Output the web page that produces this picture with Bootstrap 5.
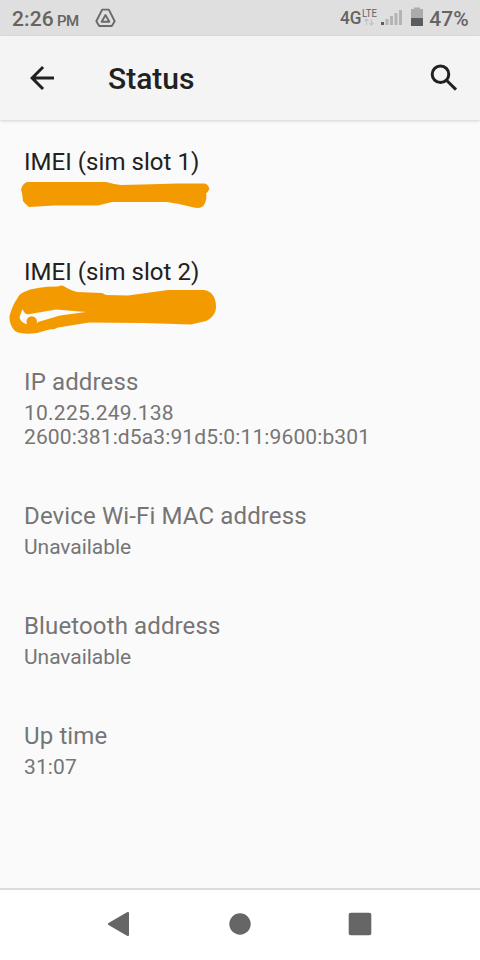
<!DOCTYPE html>
<html lang="en">
<head>
<meta charset="utf-8">
<meta name="viewport" content="width=device-width, initial-scale=1">
<title>Status</title>
<link href="https://cdn.jsdelivr.net/npm/bootstrap@5.3.0/dist/css/bootstrap.min.css" rel="stylesheet">
<style>
body{font-family:Roboto,"Liberation Sans",sans-serif;background:#fafafa;color:#212121;width:480px;height:960px;overflow:hidden}
svg{display:block;flex:none}
.statusbar{height:36px;background:#dfdfdf;color:#646464;padding:0 12px;font-weight:500;line-height:36px}
.clock{font-size:21px;letter-spacing:.15px;padding-top:1px}
.ampm{font-size:15px;margin-left:3px;padding-top:5px;letter-spacing:-.5px}
.drive{margin-left:16px}
.battery{margin-left:6px}
.level{margin:0 -1px 0 5px}
.appbar{height:84px;background:#f4f4f4;padding:0 21px 0 24px;box-shadow:0 1px 3px rgba(0,0,0,.16);z-index:1}
.screen-title{font-size:30px;font-weight:500;line-height:36px;margin-left:48px;padding-top:1px}
.settings{padding:1px 24px 0}
.entry{padding:25px 0 26px}
.entry-title{font-size:24px;line-height:32px;margin-bottom:3px;letter-spacing:.05px}
.entry.off .entry-title{letter-spacing:.13px}
.entry-value{font-size:21px;line-height:24px;min-height:24px;letter-spacing:-.04px}
.numeric{letter-spacing:.12px}
.ipv4{letter-spacing:.24px}
.off{color:#757575}
.scribble{left:-24px;top:-11px}
.navkeys{height:72px;background:#fff;border-top:2px solid #dcdcdc;padding:0 100px 2px}
</style>
</head>
<body class="d-flex flex-column">
<div class="statusbar d-flex align-items-center">
  <span class="clock">2:26</span><span class="ampm">PM</span>
  <svg class="drive" width="21" height="20" viewBox="0 0 21 20" fill="none" stroke="#6a6a6a" stroke-width="1.9" stroke-linejoin="round"><path d="M7.2 1.6H13.8L19.7 13.3L16.8 18H4.2L1.3 13.3Z"/><path d="M10.5 7L14.3 13.8H6.7Z"/></svg>
  <svg class="ms-auto" width="66" height="36" viewBox="0 0 66 36">
    <g fill="#646464" font-family="Roboto, sans-serif"><text x="2" y="23.500" font-size="19" textLength="21.500" lengthAdjust="spacingAndGlyphs">4G</text><text x="24" y="17" font-size="10" font-weight="400" textLength="15" lengthAdjust="spacingAndGlyphs">LTE</text></g>
    <path d="M28.500 25V19M26.500 21L28.500 19L30.500 21M33.500 19V25M31.500 23L33.500 25L35.500 23" fill="none" stroke="#c3c3c3" stroke-width="1.200"/>
    <path d="M47.500 19h3v6h-3zM52 16h3v9h-3zM56.500 13h3v12h-3zM61 10h3v15h-3z" fill="#b4b4b4"/>
    <rect x="43" y="22" width="3" height="3" fill="#5c5c5c"/>
  </svg>
  <svg class="battery" width="14" height="36" viewBox="0 0 14 36"><path d="M1 9h3V7.500h6V9h3v9.500H1z" fill="#ababab"/><path d="M1 18h12v8H1z" fill="#5c5c5c"/></svg>
  <span class="clock level">47%</span>
</div>
<header class="appbar d-flex align-items-center position-relative">
  <svg width="36" height="36" viewBox="0 0 24 24" fill="#212121"><path d="M20 11H7.800l5.600-5.600L12 4l-8 8 8 8 1.400-1.400L7.800 13H20z"/></svg>
  <h1 class="screen-title mb-0">Status</h1>
  <svg class="ms-auto" width="30" height="30" viewBox="0 0 30 30" fill="none" stroke="#212121" stroke-width="3"><circle cx="11.500" cy="11.300" r="8.300"/><path d="M17 16.800L27 26.600"/></svg>
</header>
<main class="settings flex-grow-1">
  <section class="entry">
    <div class="entry-title">IMEI (sim slot 1)</div>
    <div class="entry-value position-relative">
      <svg class="scribble position-absolute" width="240" height="50" viewBox="0 170 240 50" fill="#f39a00"><path d="M27 182L106 182Q111 183 114 184L121 185L143 184.500L177 183.500L205 183.500Q209 185 209.300 189Q208 192 206 193.500Q207.500 199 204 205Q201 209 194 207.500L179 204L167 202H112L98 205.500L54 205.500L29 207Q25 204 23 201L22 193L21 190Q22 184 27 182Z"/></svg>
    </div>
  </section>
  <section class="entry">
    <div class="entry-title">IMEI (sim slot 2)</div>
    <div class="entry-value position-relative">
      <svg class="scribble position-absolute" width="240" height="60" viewBox="0 280 240 60" fill="#f39a00"><path fill-rule="evenodd" d="M24 292Q35 286.500 58 286.500Q62 284 66 287.500Q72 291 77 292L102 293L106 295L128 295.500L168 290H204Q211 291 214 297Q217 304 215.500 311Q213 318 206 321L191 324.500L143 323L89 322.500L58 327.500Q54 330 51 329L37 333Q22 335 15 331Q9 325 9.500 316Q13 304 17 299Q19 294 24 292ZM22.500 309L24 312Q26 315 30 314L56 309.500L86 312L60 315.500L38 322L36 324H26Q20 322 19.500 317Z"/><circle cx="31.700" cy="321.500" r="5.300"/></svg>
    </div>
  </section>
  <section class="entry off">
    <div class="entry-title">IP address</div>
    <div class="entry-value numeric"><span class="ipv4">10.225.249.138</span><br>2600:381:d5a3:91d5:0:11:9600:b301</div>
  </section>
  <section class="entry off">
    <div class="entry-title">Device Wi-Fi MAC address</div>
    <div class="entry-value">Unavailable</div>
  </section>
  <section class="entry off">
    <div class="entry-title">Bluetooth address</div>
    <div class="entry-value">Unavailable</div>
  </section>
  <section class="entry off">
    <div class="entry-title">Up time</div>
    <div class="entry-value numeric">31:07</div>
  </section>
</main>
<footer class="navkeys d-flex justify-content-between align-items-center">
  <svg width="40" height="40" viewBox="0 0 40 40" fill="#666"><path d="M8 20.500Q7.500 19.500 8.500 19L27 8.200Q29 7.500 29 9V31Q29 32.500 27 31.800L8.500 21Z"/></svg>
  <svg width="40" height="40" viewBox="0 0 40 40" fill="#666"><circle cx="20" cy="20" r="10.700"/></svg>
  <svg width="40" height="40" viewBox="0 0 40 40" fill="#666"><rect x="8.700" y="8.700" width="22.600" height="22.600" rx="2"/></svg>
</footer>
<script src="https://cdn.jsdelivr.net/npm/bootstrap@5.3.0/dist/js/bootstrap.bundle.min.js"></script>
</body>
</html>
